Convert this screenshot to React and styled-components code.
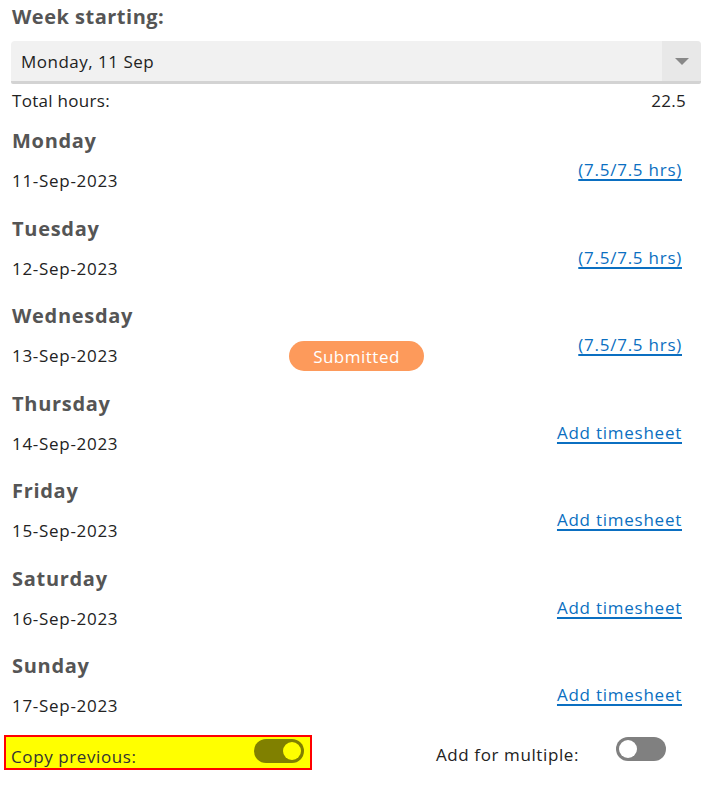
import React from "react"
import styled, { createGlobalStyle } from "styled-components"

const GlobalStyle = createGlobalStyle`
  body {
    margin: 0;
    background: #fff;
    font-family: "Open Sans", "Noto Sans", sans-serif;
  }
`

const Page = styled.div`
  width: 704px;
  padding: 2px 0 0 0;
  box-sizing: border-box;
`

const Title = styled.h2`
  margin: 0 0 9px 12px;
  font-size: 20px;
  line-height: 30px;
  font-weight: 700;
  letter-spacing: 0.5px;
  color: #555;
`

const Select = styled.div`
  margin: 0 3px 0 11px;
  height: 40px;
  display: flex;
  align-items: stretch;
  background: #f1f1f1;
  border-bottom: 3px solid #d3d3d3;
  border-radius: 4px 4px 2px 2px;
  overflow: hidden;
`

const SelectValue = styled.div`
  flex: 1;
  display: flex;
  align-items: center;
  padding-left: 10px;
  font-size: 17px;
  letter-spacing: 0.5px;
  color: #222;
`

const SelectArrow = styled.div`
  width: 39px;
  background: #e8e8e8;
  display: flex;
  align-items: center;
  justify-content: center;

  &::after {
    content: "";
    border-left: 7px solid transparent;
    border-right: 7px solid transparent;
    border-top: 7px solid #888;
  }
`

const TotalRow = styled.div`
  margin: 7px 18px 15px 12px;
  display: flex;
  justify-content: space-between;
  font-size: 17px;
  line-height: 20px;
  letter-spacing: 0.3px;
  color: #222;
`

const DayList = styled.div`
  display: flex;
  flex-direction: column;
  gap: 3.5px;
  padding: 0 22px 0 12px;
`

const Day = styled.div`
  height: 84px;
`

const DayName = styled.div`
  font-size: 20px;
  font-weight: 700;
  line-height: 30px;
  letter-spacing: 0.7px;
  color: #555;
`

const DayRow = styled.div`
  display: grid;
  grid-template-columns: 277px 135px 1fr;
  align-items: start;
`

const DateText = styled.div`
  padding-top: 13px;
  font-size: 17px;
  line-height: 24px;
  letter-spacing: 0.7px;
  color: #222;
`

const Pill = styled.span`
  margin-top: 10px;
  height: 30px;
  border-radius: 15px;
  background: #fd9a5b;
  color: #fff;
  font-size: 17px;
  letter-spacing: 0.5px;
  display: flex;
  align-items: center;
  justify-content: center;
`

const HoursLink = styled.a`
  grid-column: 3;
  justify-self: end;
  margin-top: 2px;
  font-size: 17px;
  line-height: 24px;
  letter-spacing: 0.75px;
  color: #0b6fc1;
  text-decoration: underline;
  text-decoration-thickness: 2px;
  text-underline-offset: 3px;
  cursor: pointer;
`

const Footer = styled.div`
  display: flex;
  align-items: flex-start;
  padding-left: 4px;
`

const Highlight = styled.div`
  width: 308px;
  height: 35px;
  box-sizing: border-box;
  border: 2px solid #f00;
  background: #ff0;
  display: flex;
  justify-content: space-between;
  align-items: flex-start;
  padding: 0 6px 0 5px;
`

const OptionLabel = styled.span`
  margin-top: 10px;
  font-size: 17px;
  line-height: 20px;
  letter-spacing: 0.6px;
  color: ${p => (p.$dark ? "#222" : "#333")};
`

const MultiGroup = styled.div`
  margin-left: 124px;
  height: 35px;
  display: flex;
  align-items: flex-start;
  gap: 37px;
`

const Toggle = styled.span`
  margin-top: 2px;
  width: 50px;
  height: 24px;
  border-radius: 12px;
  background: ${p => (p.$on ? "#808000" : "#808080")};
  position: relative;
  flex-shrink: 0;

  &::after {
    content: "";
    position: absolute;
    top: 3px;
    ${p => (p.$on ? "right: 3px;" : "left: 3px;")}
    width: 18px;
    height: 18px;
    border-radius: 50%;
    background: ${p => (p.$on ? "#ff0" : "#fff")};
  }
`

const days = [
  { name: "Monday", date: "11-Sep-2023", link: "(7.5/7.5 hrs)" },
  { name: "Tuesday", date: "12-Sep-2023", link: "(7.5/7.5 hrs)" },
  { name: "Wednesday", date: "13-Sep-2023", link: "(7.5/7.5 hrs)", status: "Submitted" },
  { name: "Thursday", date: "14-Sep-2023", link: "Add timesheet" },
  { name: "Friday", date: "15-Sep-2023", link: "Add timesheet" },
  { name: "Saturday", date: "16-Sep-2023", link: "Add timesheet" },
  { name: "Sunday", date: "17-Sep-2023", link: "Add timesheet" },
]

export default function App() {
  return (
    <Page>
      <GlobalStyle />
      <Title>Week starting:</Title>
      <Select>
        <SelectValue>Monday, 11 Sep</SelectValue>
        <SelectArrow />
      </Select>
      <TotalRow>
        <span>Total hours:</span>
        <span>22.5</span>
      </TotalRow>

      <DayList>
        {days.map(d => (
          <Day key={d.name}>
            <DayName>{d.name}</DayName>
            <DayRow>
              <DateText>{d.date}</DateText>
              {d.status && <Pill>{d.status}</Pill>}
              <HoursLink>{d.link}</HoursLink>
            </DayRow>
          </Day>
        ))}
      </DayList>

      <Footer>
        <Highlight>
          <OptionLabel>Copy previous:</OptionLabel>
          <Toggle $on />
        </Highlight>
        <MultiGroup>
          <OptionLabel $dark>Add for multiple:</OptionLabel>
          <Toggle />
        </MultiGroup>
      </Footer>
    </Page>
  )
}
